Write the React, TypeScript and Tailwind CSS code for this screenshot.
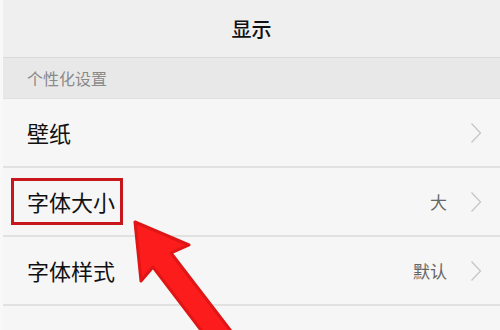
const font = { fontFamily: '"Noto Sans CJK SC", "Noto Sans", sans-serif' };

const rows = [
  { label: '壁纸', value: '' },
  { label: '字体大小', value: '大', marked: true },
  { label: '字体样式', value: '默认' },
  { label: '屏幕色彩', value: '' },
];

function Chevron() {
  return (
    <svg width="12" height="22" viewBox="0 0 12 22" className="shrink-0">
      <path d="M1.5 1.5 L10.5 11 L1.5 20.5" fill="none" stroke="#c6c6c6" strokeWidth="1.3" />
    </svg>
  );
}

export default function App() {
  return (
    <div className="relative h-[330px] w-[500px] overflow-hidden border-l-[3px] border-[#f8f8f8] bg-[#f6f6f6]" style={font}>
      <header className="flex h-[58px] items-center justify-center border-b border-[#d9d9d9] bg-[#efefef]">
        <h1 className="text-[20px] font-medium text-[#111]">显示</h1>
      </header>

      <div className="flex h-[41px] items-center border-b border-[#e0e0e0] bg-[#e8e8e8] pl-[24px]">
        <span className="text-[16px] text-[#8a8a8a]">个性化设置</span>
      </div>

      <ul>
        {rows.map((row) => (
          <li
            key={row.label}
            className="flex h-[69px] items-center border-b-2 border-[#e1e1e1] pl-[24px] pr-[18px]"
          >
            <span
              className={
                row.marked
                  ? '-ml-[16px] flex h-[47px] w-[112px] items-center border-[3px] border-[#c8161d] pl-[13px] text-[22px] text-[#111]'
                  : 'text-[22px] text-[#111]'
              }
            >
              {row.label}
            </span>
            <span className="ml-auto mr-[23px] text-[17px] text-[#666]">{row.value}</span>
            <Chevron />
          </li>
        ))}
      </ul>

      <svg className="pointer-events-none absolute left-0 top-0" width="500" height="330" viewBox="0 0 500 330">
        <polygon
          points="132,222 186,245 168,253 231,335 204,338 150,267 138,281"
          fill="#fc1c1c"
          stroke="#e01515"
          strokeWidth="3"
          strokeLinejoin="round"
        />
      </svg>
    </div>
  );
}
